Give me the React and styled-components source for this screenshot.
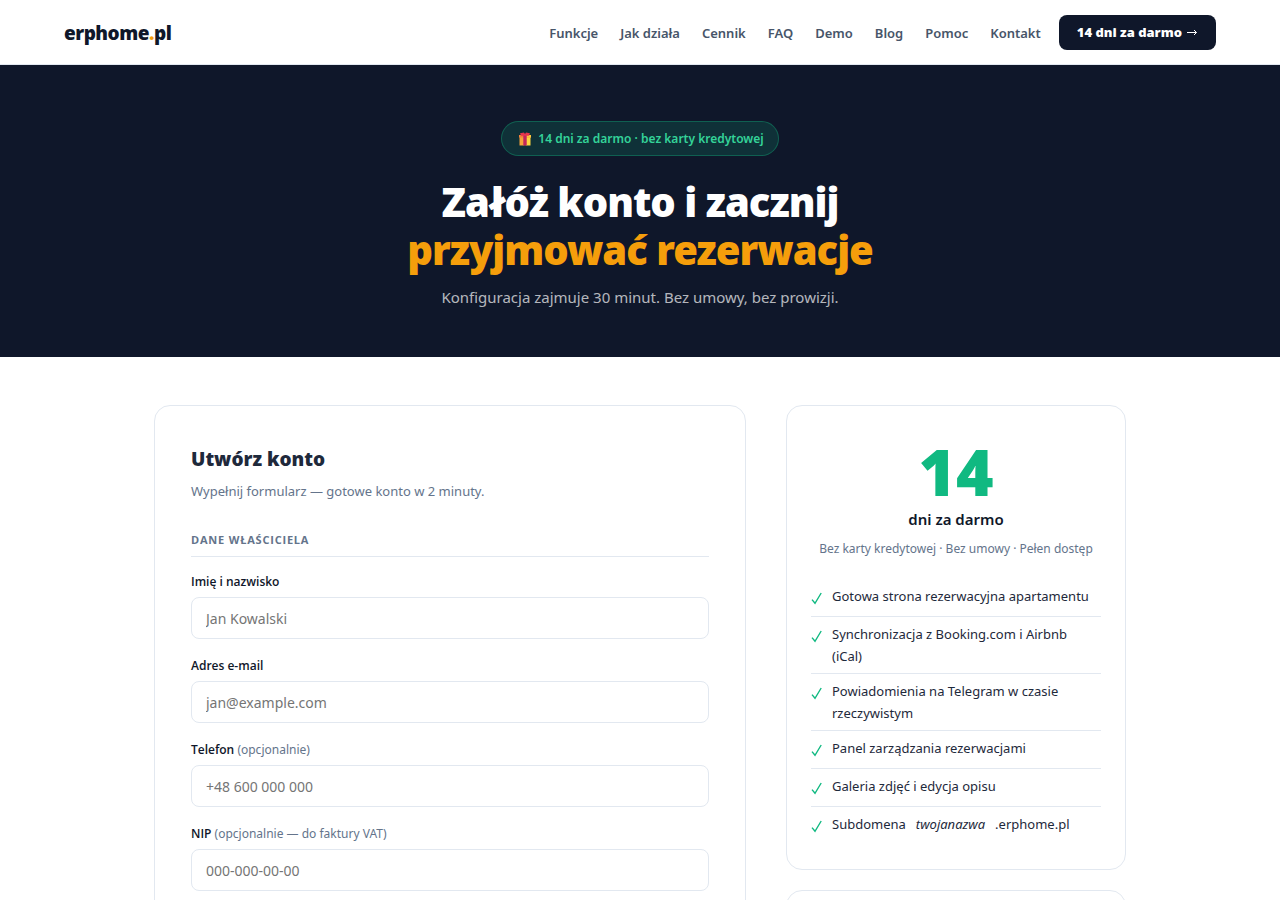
import React from "react";
import styled, { createGlobalStyle } from "styled-components";

const GlobalStyle = createGlobalStyle`
  *, *::before, *::after { box-sizing: border-box; }
  body {
    margin: 0;
    background: #fff;
    color: #1e293b;
    font-family: "Noto Sans", "Open Sans", sans-serif;
    font-size: 15px;
    line-height: 24px;
  }
  h1, h2, h3, p, ul { margin: 0; padding: 0; }
  ul { list-style: none; }
  a { text-decoration: none; }
`;

const Header = styled.header`
  display: flex;
  align-items: center;
  justify-content: space-between;
  min-height: 65px;
  padding: 0 64px;
  border-bottom: 1px solid #e2e8f0;
`;

const Logo = styled.a`
  padding-top: 2px;
  color: #0f172a;
  font-size: 19px;
  font-weight: 900;
  letter-spacing: -0.5px;
  span { color: #f59e0b; }
`;

const Nav = styled.nav`
  display: flex;
  align-items: center;
  gap: 18px;
`;

const NavList = styled.ul`
  display: flex;
  gap: 22px;
`;

const NavLink = styled.a`
  color: #475569;
  font-size: 13px;
  font-weight: 600;
`;

const TrialLink = styled.a`
  display: flex;
  align-items: center;
  gap: 4px;
  height: 35px;
  padding: 0 18px;
  border-radius: 8px;
  background: #0f172a;
  color: #fff;
  font-size: 13px;
  font-weight: 900;
`;

const Hero = styled.section`
  display: flex;
  flex-direction: column;
  align-items: center;
  padding: 56px 24px 46px;
  background: #0f172a;
  text-align: center;
`;

const Badge = styled.p`
  display: flex;
  align-items: center;
  gap: 6px;
  height: 35px;
  margin-bottom: 22px;
  padding: 0 14px 0 16px;
  border: 1px solid rgba(16, 185, 129, 0.35);
  border-radius: 20px;
  background: rgba(16, 185, 129, 0.16);
  color: #34d399;
  font-size: 12px;
  font-weight: 600;
`;

const HeroTitle = styled.h1`
  color: #fff;
  font-size: 40px;
  font-weight: 900;
  line-height: 48px;
  letter-spacing: -1px;
  span { display: block; color: #f59e0b; }
`;

const HeroText = styled.p`
  margin-top: 10px;
  color: rgba(255, 255, 255, 0.7);
  font-size: 15px;
  line-height: 27px;
`;

const Main = styled.main`
  display: grid;
  grid-template-columns: minmax(0, 1fr) 340px;
  align-items: start;
  gap: 40px;
  max-width: 1020px;
  margin: 0 auto;
  padding: 48px 24px;
`;

const Card = styled.section`
  padding: ${(p) => p.$padding};
  border: 1px solid #e2e8f0;
  border-radius: 16px;
  background: #fff;
`;

const Sidebar = styled.aside`
  display: grid;
  gap: 20px;
`;

const FormTitle = styled.h2`
  color: #1e293b;
  font-size: 19px;
  font-weight: 900;
  line-height: 34px;
`;

const FormIntro = styled.p`
  margin-top: 3px;
  color: #64748b;
  font-size: 13px;
`;

const Fields = styled.fieldset`
  margin: 28px 0 0;
  padding: 0;
  border: 0;
  min-width: 0;
`;

const Legend = styled.legend`
  width: 100%;
  margin-bottom: 14px;
  padding: 0 0 7px;
  border-bottom: 1px solid #e2e8f0;
  color: #64748b;
  font-family: "Open Sans", sans-serif;
  font-size: 11px;
  font-weight: 700;
  line-height: 18px;
  letter-spacing: 0.8px;
  text-transform: uppercase;
`;

const Field = styled.div`
  display: flex;
  flex-direction: column;
  margin-bottom: 16px;
`;

const Label = styled.label`
  margin-bottom: 5px;
  color: #0f172a;
  font-family: "Open Sans", sans-serif;
  font-size: 12px;
  font-weight: 600;
  line-height: 21px;
  span { color: #64748b; font-family: "Noto Sans", sans-serif; font-weight: 400; }
`;

const Input = styled.input`
  width: 100%;
  height: 42px;
  padding: 0 14px;
  border: 1px solid #e2e8f0;
  border-radius: 8px;
  background: #fff;
  color: #0f172a;
  font: inherit;
  font-size: 14px;
  &::placeholder { color: #757575; }
`;

const TrialSummary = styled.div`
  margin-bottom: 19px;
  text-align: center;
`;

const TrialNumber = styled.p`
  color: #10b981;
  font-size: 64px;
  font-weight: 900;
  line-height: 68px;
`;

const TrialLabel = styled.h3`
  color: #0f172a;
  font-size: 15px;
  font-weight: 600;
  line-height: 26px;
`;

const TrialNote = styled.p`
  margin-top: 6px;
  color: #64748b;
  font-size: 12px;
  line-height: 22px;
`;

const Benefit = styled.li`
  display: flex;
  align-items: flex-start;
  gap: 10px;
  padding: 6px 8px 6px 0;
  border-bottom: 1px solid #e2e8f0;
  color: #1e293b;
  font-size: 13px;
  line-height: 22px;
  &:last-child { border-bottom: 0; }
`;

const CheckMark = styled.svg`
  flex: none;
  width: 11px;
  height: 25px;
`;

const Check = () => (
  <CheckMark viewBox="0 0 11 25" fill="none" stroke="#10b981" strokeWidth="1.4" aria-hidden="true">
    <path d="M1 14.6 L4 18.3 L10.2 8" />
  </CheckMark>
);

const Gift = () => (
  <svg width="14" height="14" viewBox="0 0 14 14" aria-hidden="true">
    <path d="M1.5 5h5v8.5h-5z" fill="#f7a23b" />
    <path d="M7.500 5h5v8.500h-5z" fill="#fcd53f" />
    <path d="M1 3h12v2.500H1z" fill="#f3813a" />
    <path d="M8 3h5v2.500H8z" fill="#ffc83d" />
    <path d="M5.300 3h3.400v10.500H5.300z" fill="#c3255c" />
    <path d="M2 1.200 6 .6 7 2l1-1.400 4 .6-1 2.600H3z" fill="#e8354d" />
  </svg>
);

const Arrow = () => (
  <svg width="12" height="10" viewBox="0 0 12 10" fill="none" stroke="currentColor" aria-hidden="true">
    <path d="M1 5.500h9.500M8 3l2.500 2.500L8 8" />
  </svg>
);

const links = ["Funkcje", "Jak działa", "Cennik", "FAQ", "Demo", "Blog", "Pomoc", "Kontakt"];

const fields = [
  { id: "name", type: "text", label: "Imię i nazwisko", placeholder: "Jan Kowalski" },
  { id: "email", type: "email", label: "Adres e-mail", placeholder: "jan@example.com" },
  { id: "phone", type: "tel", label: "Telefon", note: "(opcjonalnie)", placeholder: "+48 600 000 000" },
  { id: "nip", type: "text", label: "NIP", note: "(opcjonalnie — do faktury VAT)", placeholder: "000-000-00-00" },
];

const benefits = [
  "Gotowa strona rezerwacyjna apartamentu",
  "Synchronizacja z Booking.com i Airbnb (iCal)",
  "Powiadomienia na Telegram w czasie rzeczywistym",
  "Panel zarządzania rezerwacjami",
  "Galeria zdjęć i edycja opisu",
];

export default function App() {
  return (
    <>
      <GlobalStyle />
      <Header>
        <Logo href="#">erphome<span>.</span>pl</Logo>
        <Nav>
          <NavList>
            {links.map((text) => (
              <li key={text}><NavLink href="#">{text}</NavLink></li>
            ))}
          </NavList>
          <TrialLink href="#">14 dni za darmo <Arrow /></TrialLink>
        </Nav>
      </Header>
      <Hero>
        <Badge><Gift />14 dni za darmo · bez karty kredytowej</Badge>
        <HeroTitle>Załóż konto i zacznij <span>przyjmować rezerwacje</span></HeroTitle>
        <HeroText>Konfiguracja zajmuje 30 minut. Bez umowy, bez prowizji.</HeroText>
      </Hero>
      <Main>
        <Card $padding="36px">
          <FormTitle>Utwórz konto</FormTitle>
          <FormIntro>Wypełnij formularz — gotowe konto w 2 minuty.</FormIntro>
          <form>
            <Fields>
              <Legend>Dane właściciela</Legend>
              {fields.map((f) => (
                <Field key={f.id}>
                  <Label htmlFor={f.id}>{f.label} {f.note && <span>{f.note}</span>}</Label>
                  <Input id={f.id} type={f.type} placeholder={f.placeholder} />
                </Field>
              ))}
            </Fields>
          </form>
        </Card>
        <Sidebar>
          <Card $padding="32px 24px 25px">
            <TrialSummary>
              <TrialNumber>14</TrialNumber>
              <TrialLabel>dni za darmo</TrialLabel>
              <TrialNote>Bez karty kredytowej · Bez umowy · Pełen dostęp</TrialNote>
            </TrialSummary>
            <ul>
              {benefits.map((text) => (
                <Benefit key={text}><Check /><span>{text}</span></Benefit>
              ))}
              <Benefit><Check /><span>Subdomena</span><em>twojanazwa</em><span>.erphome.pl</span></Benefit>
            </ul>
          </Card>
          <Card $padding="24px" />
        </Sidebar>
      </Main>
    </>
  );
}
